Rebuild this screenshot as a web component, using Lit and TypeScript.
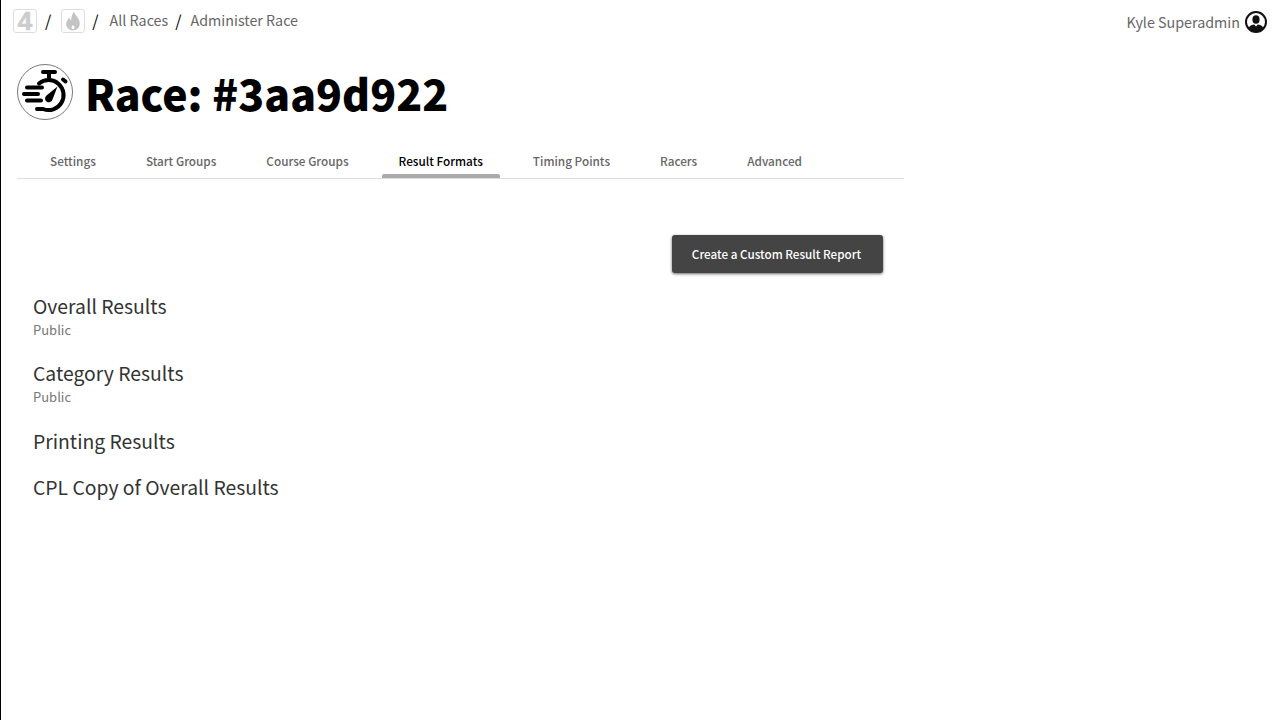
import { LitElement, html, css, svg } from "lit";
import { customElement } from "lit/decorators.js";

const tabs = ["Settings", "Start Groups", "Course Groups", "Result Formats", "Timing Points", "Racers", "Advanced"];
const results = [
  { name: "Overall Results", sub: "Public" },
  { name: "Category Results", sub: "Public" },
  { name: "Printing Results", sub: "" },
  { name: "CPL Copy of Overall Results", sub: "" },
];

@customElement("app-root")
export class AppRoot extends LitElement {
  static styles = css`
    :host {
      display: block;
      height: 720px;
      box-sizing: border-box;
      border-left: 1px solid #000;
      font-family: "Noto Sans CJK JP", "Noto Sans", sans-serif;
      color: #000;
      background: #fff;
      overflow: hidden;
    }
    .top {
      display: flex;
      justify-content: space-between;
      align-items: flex-start;
      height: 54px;
      padding: 9px 12px 0 12px;
      box-sizing: border-box;
    }
    .crumbs {
      display: flex;
      align-items: center;
      height: 24px;
      font-size: 14.3px;
      color: #666;
    }
    .crumbs .txt { position: relative; top: -2px; }
    .logo {
      width: 24px;
      height: 24px;
      box-sizing: border-box;
      border: 1px solid #ddd;
      border-radius: 3px;
      display: flex;
      align-items: center;
      justify-content: center;
    }
    .sep { color: #000; font-size: 16px; position: relative; top: -1px; }
    .sep.s1 { margin: 0 10px 0 8px; }
    .sep.s2 { margin: 0 11px 0 7px; }
    .sep.s3 { margin: 0 9px 0 7px; }
    .four {
      font-family: "Liberation Sans", sans-serif;
      font-weight: 700;
      font-size: 26px;
      line-height: 24px;
      color: #ccc;
      -webkit-text-stroke: 0.6px #ccc;
    }
    .user {
      display: flex;
      align-items: center;
      gap: 5px;
      height: 26px;
      font-size: 14.3px;
      color: #666;
      margin-right: 1px;
    }
    .user span { position: relative; top: -1px; }
    .title {
      display: flex;
      align-items: center;
      gap: 12px;
      padding-left: 16px;
      height: 76px;
    }
    h1 {
      margin: 0;
      font-size: 42.7px;
      font-weight: 900;
      line-height: 76px;
      color: #000;
    }
    .tabs {
      display: flex;
      margin: 15px 0 0 16px;
      width: 887px;
      height: 34px;
      box-sizing: border-box;
      border-bottom: 1px solid #ddd;
      padding-left: 16px;
    }
    .tab {
      position: relative;
      padding: 0 17px;
      margin-right: 16px;
      font-size: 11.76px;
      font-weight: 500;
      line-height: 32px;
      color: #666;
      white-space: nowrap;
    }
    .tab.active { color: #000; }
    .tab.active::after {
      content: "";
      position: absolute;
      left: 0;
      right: 0;
      bottom: 0;
      height: 4px;
      background: #aaa;
      border-radius: 2px 2px 0 0;
    }
    .actions {
      display: flex;
      justify-content: flex-end;
      width: 866px;
      margin: 56px 0 0 16px;
    }
    button {
      height: 38px;
      width: 211px;
      padding: 0 2px 2px 0;
      border: none;
      border-radius: 3px;
      background: #444;
      color: #fff;
      font-family: inherit;
      font-size: 11.7px;
      font-weight: 500;
      box-shadow: 0 1px 3px rgba(0, 0, 0, 0.6);
    }
    .list { margin: 19px 0 0 32px; }
    .row { padding-bottom: 18px; }
    .name { font-size: 19.35px; line-height: 28px; color: #333; }
    .sub { font-size: 13px; line-height: 18px; color: #777; margin-top: 1px; margin-bottom: 2.4px; }
  `;

  private watch() {
    return html`<svg width="56" height="56" viewBox="0 0 56 56">
      <circle cx="28" cy="28" r="27.5" fill="#fff" stroke="#555" stroke-width="0.8"></circle>
      <g fill="none" stroke="#000" stroke-width="4" stroke-linecap="round">
        ${svg`<path d="M26 8 H38 M32 8 V14"></path>
        <path d="M22 19.5 A15 15 0 1 1 26 45 H20"></path>
        <path d="M46 15.5 L48.5 17.5"></path>
        <path d="M10 23.5 H25 M7 30 H21 M10 36.5 H24"></path>`}
      </g>
      <path d="M29.5 31.5 L40.5 22.5 L35.5 35.5 A3.8 3.8 0 1 1 29.5 31.5 Z" fill="#000"></path>
    </svg>`;
  }

  private flame() {
    return html`<svg width="18" height="20" viewBox="0 0 18 20">
      <path d="M10 0.5 C10.5 4 15.8 7 15.8 12.5 C15.8 16.5 12.5 19.5 9 19.5 C5.2 19.5 2.2 16.5 2.2 13 C2.2 10 4 8.5 5.2 6.5 C5.8 8 6.3 8.8 7.2 9.4 C7.2 6 8.2 3 10 0.5 Z M9 14 C8.2 15 7.5 15.7 7.5 16.7 C7.5 17.6 8.2 18.2 9 18.2 C9.8 18.2 10.5 17.6 10.5 16.7 C10.5 15.7 9.8 15 9 14 Z" fill="#c4c4c4" fill-rule="evenodd"></path>
    </svg>`;
  }

  private avatar() {
    return html`<svg width="22" height="22" viewBox="0 0 22 22">
      <circle cx="11" cy="11" r="10" fill="#fff" stroke="#111" stroke-width="2"></circle>
      <ellipse cx="11" cy="8.5" rx="3.6" ry="4.3" fill="#111"></ellipse>
      <path d="M3.5 17 C5 14.4 7.5 13.8 9.2 13.6 L11 15.4 L12.8 13.6 C14.5 13.8 17 14.4 18.5 17 C16.5 19.6 14 21 11 21 C8 21 5.5 19.6 3.5 17 Z" fill="#111"></path>
    </svg>`;
  }

  render() {
    return html`
      <div class="top">
        <div class="crumbs">
          <span class="logo"><span class="four">4</span></span>
          <span class="sep s1">/</span>
          <span class="logo">${this.flame()}</span>
          <span class="sep s2">/</span>
          <span class="txt">All Races</span>
          <span class="sep s3">/</span>
          <span class="txt">Administer Race</span>
        </div>
        <div class="user"><span>Kyle Superadmin</span>${this.avatar()}</div>
      </div>
      <div class="title">${this.watch()}<h1>Race: #3aa9d922</h1></div>
      <nav class="tabs">
        ${tabs.map((t) => html`<div class="tab ${t === "Result Formats" ? "active" : ""}">${t}</div>`)}
      </nav>
      <div class="actions"><button>Create a Custom Result Report</button></div>
      <div class="list">
        ${results.map(
          (r) => html`<div class="row">
            <div class="name">${r.name}</div>
            ${r.sub ? html`<div class="sub">${r.sub}</div>` : ""}
          </div>`
        )}
      </div>
    `;
  }
}
